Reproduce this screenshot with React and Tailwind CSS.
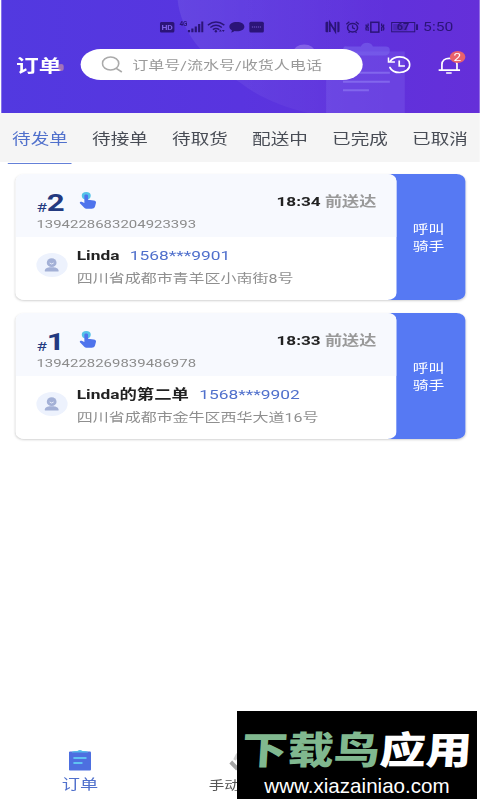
import React, { useState } from 'react';

const TABS = ['待发单', '待接单', '待取货', '配送中', '已完成', '已取消'];

const ORDERS = [
  {
    num: 2,
    code: '1394228683204923393',
    time: '18:34',
    name: 'Linda',
    phone: '1568***9901',
    address: '四川省成都市青羊区小南街8号'
  },
  {
    num: 1,
    code: '1394228269839486978',
    time: '18:33',
    name: 'Linda的第二单',
    phone: '1568***9902',
    address: '四川省成都市金牛区西华大道16号'
  }
];

const HeaderArt = () => (
  <svg className="absolute inset-0 w-full h-full" viewBox="0 0 480 112" preserveAspectRatio="none">
    <defs>
      <linearGradient id="glow" x1="0" y1="0" x2="0.7" y2="0">
        <stop offset="0" stopColor="#fff" stopOpacity="0.08" />
        <stop offset="1" stopColor="#fff" stopOpacity="0" />
      </linearGradient>
    </defs>
    <path d="M177 0C180 30 202 58 240 82C258 96 282 106 308 112H480V0Z" fill="url(#glow)" />
    <ellipse cx="304" cy="52" rx="11" ry="8" fill="#a58cf0" opacity="0.5" />
    <rect x="326" y="51" width="79" height="65" fill="#8c78f5" opacity="0.25" />
    <path d="M347 46H361C362 41 372 41 373 46H386Q390 46 390 50T386 55H347Q343 55 343 50T347 46Z" fill="#7d6cf0" opacity="0.5" />
    <path d="M343 72H390M343 81H390M343 89.500H369" stroke="#9683f6" strokeWidth="2" opacity="0.55" />
  </svg>
);

const StatusLeft = () => (
  <svg className="w-[81.5px] h-4" viewBox="160 19 106 16" preserveAspectRatio="none" fill="#2b1478">
    <rect x="160" y="22" width="14.500" height="10.500" rx="1.500" />
    <text x="161.500" y="30.300" fontSize="8" fontWeight="700" textLength="11.500" lengthAdjust="spacingAndGlyphs" fill="#7d60e6" fontFamily="Roboto">HD</text>
    <text x="179.500" y="26.500" fontSize="6.500" fontWeight="700" textLength="8" lengthAdjust="spacingAndGlyphs" fontFamily="Roboto">4G</text>
    <path d="M188 30h2.200v2.300h-2.200zM191.400 28.500h2.200v3.800h-2.200zM194.800 26.500h2.200v5.800h-2.200zM198.200 24h2.200v8.300h-2.200zM201.400 21.500h2v10.800h-2z" />
    <g fill="none" stroke="#2b1478" strokeWidth="1.500">
      <path d="M208 25.200Q216 19 224.500 25.200M210.500 27.500Q216 23.200 222 27.500M213 29.600Q216 27.400 219.500 29.600" />
    </g>
    <circle cx="216" cy="31.300" r="1.200" />
    <path d="M219 31.500l1.500-2 1.500 2zM222 30l1.500 2 1.300-2z" />
    <path d="M237 22c4.500 0 7.500 2 7.500 4.700s-3 4.600-7.500 4.600c-.8 0-1.500 0-2.200-.2-1 .8-2.200 1.300-3.800 1.400.8-.8 1.100-1.500 1-2.300-1.600-.9-2.500-2.100-2.500-3.500 0-2.700 3-4.700 7.500-4.700z" />
    <rect x="249.500" y="21.800" width="14.500" height="10.700" rx="1.500" />
    <path d="M252 27h9.500" stroke="#7254c8" strokeWidth="1.500" strokeDasharray="1.200 0.8" opacity="0.7" />
  </svg>
);

const StatusRight = () => (
  <svg className="w-[72.500px] h-4" viewBox="325 19 94 16" preserveAspectRatio="none" fill="#2b1478">
    <path d="M325.500 23q0-1.300 1.200-1.300h1.500v10.600h-1.700q-1 0-1-1zM337.300 21.700h1.200q1 0 1 1v8.300q0 1.300-1.200 1.300h-1z" />
    <path d="M329.800 32V22.500L335.300 31.500V22" fill="none" stroke="#2b1478" strokeWidth="1.700" />
    <g fill="none" stroke="#2b1478">
      <ellipse cx="352.500" cy="27.700" rx="5" ry="4.200" strokeWidth="1.500" />
      <path d="M352.500 25.300v2.600l2.300 1M346.300 24.300l3-2.500M358.700 24.300l-3-2.500M348.500 32.800l1.200-1.200M356.500 32.800l-1.200-1.200" strokeWidth="1.300" />
      <rect x="370.700" y="22.300" width="8" height="9.800" strokeWidth="1.500" />
      <path d="M368 23.500v2l-1 1 1 1v3.500M381.500 23.500v2l1 1-1 1v3.500M365.800 24.500l.5 2-.5 2 .5 2M383.700 24.500l-.5 2 .5 2-.5 2" strokeWidth="1.300" />
      <rect x="391.500" y="22.500" width="23" height="9.300" strokeWidth="1" />
    </g>
    <rect x="393" y="24" width="14" height="6.500" opacity="0.35" />
    <rect x="415.800" y="24.300" width="2" height="5.700" />
    <text x="396.500" y="30.300" fontSize="8.500" fontWeight="700" textLength="12.500" lengthAdjust="spacingAndGlyphs" fontFamily="Roboto">67</text>
  </svg>
);

const HistoryIcon = () => (
  <svg className="w-[18.500px] h-[18px]" viewBox="387 56 24 18" preserveAspectRatio="none" fill="none" stroke="#fff" strokeWidth="1.700">
    <path d="M389.800 61.200C392 58.300 395.500 56.900 399.200 56.900C405 56.900 409.300 60.300 409.300 64.700S405 72.500 399.200 72.500C394.500 72.500 391 70.500 389.500 67.500" strokeLinecap="round" />
    <path d="M388 57.500V62H394.500" />
    <path d="M398.800 60.500V66H404.500" />
  </svg>
);

const BellIcon = () => (
  <svg className="w-[17px] h-[17px]" viewBox="438.500 57 22 17" preserveAspectRatio="none" fill="none" stroke="#fff" strokeWidth="1.700">
    <path d="M442.300 70V64.500C442.300 60.500 445.500 58.300 449.700 58.300S457.300 60.500 457.300 64.500V70" />
    <path d="M439 70.200H460.500M446.500 73H452" />
  </svg>
);

const TapIcon = () => (
  <svg className="w-[13px] h-[17px]" viewBox="78.500 191.500 17 17" preserveAspectRatio="none">
    <ellipse cx="85.500" cy="195.300" rx="4.500" ry="3.700" fill="#55c3e8" />
    <path d="M83.600 195.300C83.600 193.700 87.300 193.700 87.300 195.300V199.300L93 200C94.700 200.200 95.500 201 95.300 202.300L94.300 206C93.800 207.600 92.500 208.200 91 208.200H86.500C85 208.200 84 207.700 83 206.700L78.900 202.500C78.800 201.300 80.300 200.800 81.500 201.400L83.600 202.500Z" fill="#4f74ec" />
  </svg>
);

const Avatar = () => (
  <div className="w-[23.500px] h-[24px] rounded-full bg-[#edf2fd] flex items-center justify-center">
    <svg className="w-[11.500px] h-[14px]" viewBox="0 0 15 14" preserveAspectRatio="none">
      <ellipse cx="7.500" cy="4.700" rx="4.900" ry="4.400" fill="#a3b0d6" />
      <path d="M0.500 13C0.300 10.500 3.500 9.500 5.300 9.200H9.700C11.500 9.500 14.700 10.500 14.500 13Q14.500 13.500 13.500 13.500H1.500Q0.500 13.500 0.500 13Z" fill="#a3b0d6" />
      <path d="M5.500 5Q7.500 7 9.500 5" stroke="#edf2fd" strokeWidth="0.900" fill="none" />
    </svg>
  </div>
);

const OrderCard = ({ order }) => (
  <div className="h-[126px] flex bg-white rounded-[7px] shadow-[0_1px_2px_rgba(0,0,0,0.18)]">
    <div className="relative z-10 w-[293.500px] flex flex-col bg-white rounded-[7px] overflow-hidden">
      <div className="h-[63px] bg-[#f7f9fe] pl-[16.500px] pr-[15.500px] flex justify-between">
        <div>
          <div className="h-[42px] flex items-end text-[#233a80]">
            <span className="text-[13px] leading-[16px]">#</span>
            <span className="text-[24px] leading-[26px] font-bold">{order.num}</span>
            <span className="ml-[11px] mb-[7.500px]"><TapIcon /></span>
          </div>
          <div className="text-[11.500px] leading-[16px] text-[#8c8c8c]">{order.code}</div>
        </div>
        <div className="pt-[19px] text-[13.200px] leading-[18px] font-bold text-[#999]">
          <span className="text-[#222]">{order.time}</span> 前送达
        </div>
      </div>
      <div className="flex pl-[16.500px] pt-[9px]">
        <div className="pt-[7px]"><Avatar /></div>
        <div className="ml-[7.500px] whitespace-nowrap">
          <div className="text-[13.350px] leading-[20px]">
            <span className="font-bold text-[#222]">{order.name}</span>
            <span className="ml-[8px] text-[#5070cc]">{order.phone}</span>
          </div>
          <div className="mt-[4px] text-[12.300px] leading-[18px] text-[#8f8f8f]">{order.address}</div>
        </div>
      </div>
    </div>
    <button className="flex-1 -ml-[10px] pl-[10px] pr-[3.500px] pt-[4px] rounded-r-[7px] bg-[#5679f3] flex flex-col items-center justify-center text-[12.200px] leading-[17.500px] text-white">
      <span>呼叫</span>
      <span>骑手</span>
    </button>
  </div>
);

const Watermark = () => (
  <div className="absolute left-[237px] top-[711px] w-[240px] h-[88px] bg-black overflow-hidden flex flex-col items-center">
    <div className="mt-[12px] h-[49px] leading-[49px] text-[38px] font-black whitespace-nowrap scale-x-[1.210] -skew-x-3 text-white font-['Noto_Sans_CJK_SC',sans-serif]">
      <span className="text-[#80b88f]">下载鸟</span>应用
    </div>
    <div className="mt-[2px] text-[20.600px] leading-[24px] text-white font-['Liberation_Sans',sans-serif]">www.xiazainiao.com</div>
  </div>
);

const App = () => {
  const [tab, setTab] = useState(0);

  return (
    <div className="relative w-[480px] h-[800px] overflow-hidden bg-white">
      {/* The screen is laid out narrow and widened to the full width */}
      <div className="w-[369.230px] h-[800px] origin-top-left scale-x-[1.300] flex flex-col font-['Roboto','Noto_Sans_CJK_SC',sans-serif]">

        {/* Header */}
        <header className="relative h-[113px] shrink-0 ml-[0.700px] mr-[0.700px] bg-linear-to-r from-[#5239e0] via-[#5934df] to-[#652fd9]">
          <HeaderArt />
          <div className="relative h-[49px] pt-[19px] pl-[122.400px] flex items-start">
            <StatusLeft />
            <div className="ml-[45.400px] shrink-0"><StatusRight /></div>
            <span className="ml-[3px] text-[12px] leading-[17px] text-[#2b1478]">5:50</span>
          </div>
          <div className="relative h-[31px] flex items-center">
            <h1 className="w-[61.500px] pl-[11.600px] text-[17.500px] leading-[34px] font-bold text-white whitespace-nowrap flex items-center">
              <span className="pt-[3px]">订单</span>
              <span className="w-[4px] h-[7px] -ml-[2px] mt-[5px] rounded-full bg-[#c48ba8]/70" />
            </h1>
            <div className="w-[216.500px] h-[31px] rounded-full bg-white flex items-center pl-[16px]">
              <svg className="w-[16.500px] h-[17px]" viewBox="0 0 21 17" preserveAspectRatio="none" fill="none" stroke="#aaa" strokeWidth="1.600">
                <ellipse cx="9" cy="7.500" rx="8" ry="6.500" />
                <path d="M14.500 12.300L20 16" />
              </svg>
              <span className="ml-[7px] pt-[3px] text-[12.350px] text-[#999] whitespace-nowrap">订单号/流水号/收货人电话</span>
            </div>
            <button className="ml-[19px]"><HistoryIcon /></button>
            <button className="relative ml-[21px] pt-[1px]">
              <BellIcon />
              <span className="absolute left-[8.500px] -top-[5px] w-[12.300px] h-[12px] rounded-full bg-[#e9626c] text-white text-[10.500px] leading-[13px] text-center">2</span>
            </button>
          </div>
        </header>

        {/* Tabs */}
        <nav className="h-[49px] shrink-0 bg-[#f5f5f5] flex">
          {TABS.map((t, i) => (
            <button
              key={t}
              onClick={() => setTab(i)}
              className={`flex-1 h-[51px] flex flex-col items-center justify-between whitespace-nowrap text-[14.300px] ${
                tab === i ? 'text-[#5070cc]' : 'text-[#484c55]'
              }`}
            >
              <span className="leading-[52px] h-[49px]">{t}</span>
              {tab === i && <span className="w-[49.200px] h-[1.500px] bg-[#6480d8]" />}
            </button>
          ))}
        </nav>

        {/* Orders */}
        <main className="flex-1 pt-[12px] pl-[11.500px] pr-[11.500px] space-y-[13px]">
          {ORDERS.map(o => <OrderCard key={o.code} order={o} />)}
        </main>

        {/* Bottom bar */}
        <footer className="h-[54px] shrink-0 flex">
          <div className="w-[123px] flex flex-col items-center pt-[3px]">
            <svg className="w-[17px] h-[22px]" viewBox="0 0 22 22" preserveAspectRatio="none">
              <rect x="0" y="2.500" width="22" height="19" rx="1" fill="#4d6fe0" />
              <path d="M3 3.500Q3 2 6 2H8.500Q11 0 13.500 2H16Q19 2 19 3.500Z" fill="#54b9ea" />
              <path d="M4.500 9H17.500M4.500 14H13.500" stroke="#5fc3f2" strokeWidth="2" />
            </svg>
            <span className="mt-[3px] text-[14px] leading-[20px] text-[#5070cc]">订单</span>
          </div>
          <div className="w-[123px] flex flex-col pl-[37.500px] pt-[5px]">
            <svg className="w-[15px] h-[22px] ml-[15px]" viewBox="0 0 20 22" preserveAspectRatio="none" fill="none">
              <path d="M2 11L9 18" stroke="#a3a3a3" strokeWidth="4" />
              <path d="M9 3L6 9" stroke="#cfcfcf" strokeWidth="3" />
            </svg>
            <span className="mt-[5px] text-[12px] leading-[16px] text-[#555]">手动</span>
          </div>
        </footer>
      </div>

      <Watermark />
    </div>
  );
};

export default App;
